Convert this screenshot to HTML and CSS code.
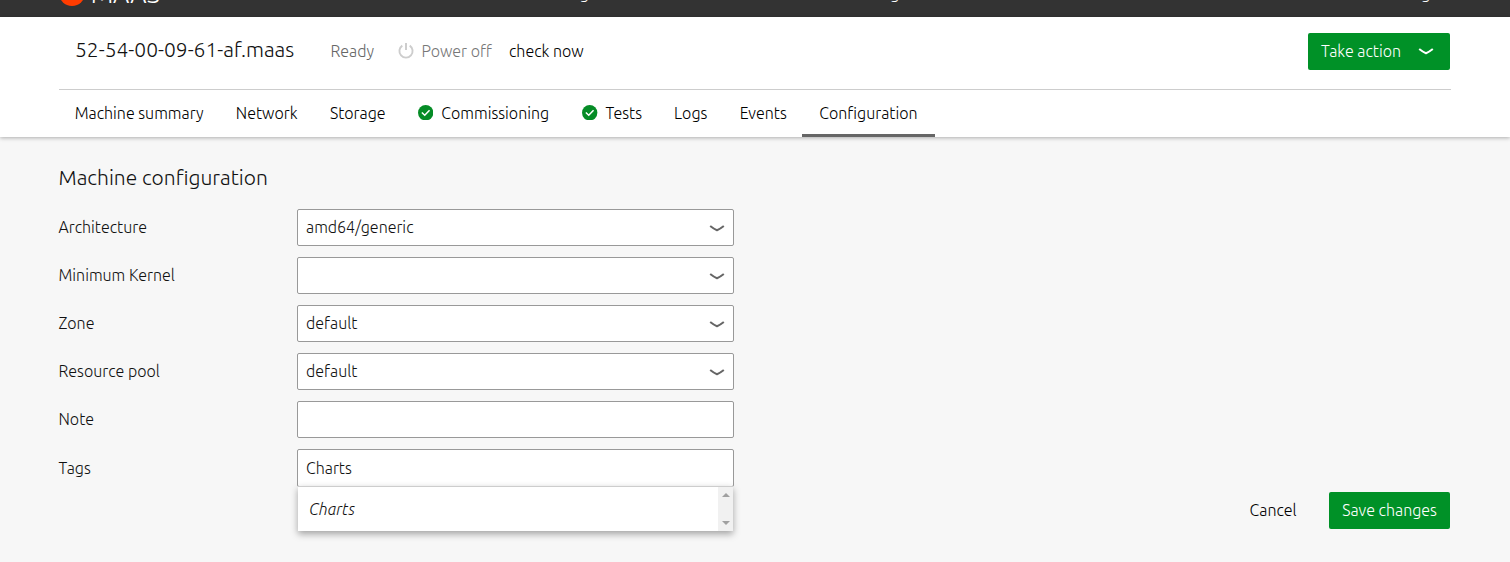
FILE: index.html
```html
<!DOCTYPE html>
<html lang="en">
<head>
<meta charset="utf-8">
<title>Machine configuration</title>
<link rel="stylesheet" href="styles.css">
</head>
<body>
<nav class="topbar">
  <div class="topbar-inner">
    <span class="logo-dot"></span>
    <span class="brand">MAAS</span>
    <span class="nav-link nav-images">Images</span>
    <span class="nav-link nav-settings">Settings</span>
    <span class="nav-link">Log out</span>
  </div>
</nav>
<header class="section-header">
  <div class="title-row">
    <h1 class="machine-name">52-54-00-09-61-af.maas</h1>
    <span class="status">Ready</span>
    <span class="power">
      <svg class="power-icon" viewBox="0 0 16 16"><path d="M4.3 2.6A6.6 6.6 0 1 0 11.7 2.6" fill="none" stroke="#cdcdcd" stroke-width="1.9"/><path d="M8 0V7" stroke="#cdcdcd" stroke-width="2"/></svg>
      <span>Power off</span>
    </span>
    <a class="check">check now</a>
    <button class="btn take-action"><span>Take action</span>
      <svg class="chevron" viewBox="0 0 16 16"><path d="M1.2 6Q5 9 8 10.2Q11 9 14.8 6" fill="none" stroke="#fff" stroke-width="2"/></svg>
    </button>
  </div>
  <div class="tabs">
    <a class="tab">Machine summary</a>
    <a class="tab">Network</a>
    <a class="tab">Storage</a>
    <a class="tab"><svg class="ok" viewBox="0 0 16 16"><circle cx="8" cy="8" r="8" fill="#058c26"/><path d="M4 7.8L7 10.6L12 5.4" fill="none" stroke="#fff" stroke-width="1.6"/></svg>Commissioning</a>
    <a class="tab tab-tests"><svg class="ok" viewBox="0 0 16 16"><circle cx="8" cy="8" r="8" fill="#058c26"/><path d="M4 7.8L7 10.6L12 5.4" fill="none" stroke="#fff" stroke-width="1.6"/></svg>Tests</a>
    <a class="tab">Logs</a>
    <a class="tab">Events</a>
    <a class="tab selected">Configuration</a>
  </div>
</header>
<main class="content">
  <h2 class="heading">Machine configuration</h2>
  <div class="form">
    <div class="row"><label class="label">Architecture</label><div class="field"><span>amd64/generic</span><svg class="chevron" viewBox="0 0 16 16"><path d="M1.2 6Q5 9 8 10.2Q11 9 14.8 6" fill="none" stroke="#666" stroke-width="2"/></svg></div></div>
    <div class="row"><label class="label">Minimum Kernel</label><div class="field"><span></span><svg class="chevron" viewBox="0 0 16 16"><path d="M1.2 6Q5 9 8 10.2Q11 9 14.8 6" fill="none" stroke="#666" stroke-width="2"/></svg></div></div>
    <div class="row"><label class="label">Zone</label><div class="field"><span>default</span><svg class="chevron" viewBox="0 0 16 16"><path d="M1.2 6Q5 9 8 10.2Q11 9 14.8 6" fill="none" stroke="#666" stroke-width="2"/></svg></div></div>
    <div class="row"><label class="label">Resource pool</label><div class="field"><span>default</span><svg class="chevron" viewBox="0 0 16 16"><path d="M1.2 6Q5 9 8 10.2Q11 9 14.8 6" fill="none" stroke="#666" stroke-width="2"/></svg></div></div>
    <div class="row"><label class="label">Note</label><div class="field"></div></div>
    <div class="row tags-row"><label class="label">Tags</label><div class="field"><span>Charts</span>
      <div class="dropdown"><em class="option">Charts</em>
        <div class="scrollbar"><svg class="arrow" viewBox="0 0 8 4"><path d="M0 4L4 0L8 4Z" fill="#a0a0a0"/></svg><svg class="arrow" viewBox="0 0 8 4"><path d="M0 0L4 4L8 0Z" fill="#a0a0a0"/></svg></div>
      </div></div></div>
  </div>
  <div class="actions"><button class="cancel">Cancel</button><button class="btn save">Save changes</button></div>
</main>
</body>
</html>
```
FILE: styles.css
```css
* { box-sizing: border-box; }
body { margin: 0; height: 562px; overflow: hidden; background: #f7f7f7; color: #111; font: 300 16px/24px Ubuntu, "Open Sans", "Noto Sans", sans-serif; }
h1, h2 { margin: 0; font-weight: 300; }
button { font: inherit; border: 0; padding: 0; }
span, label, h1, a, em { white-space: nowrap; }

.topbar { height: 17px; background: #333; color: #fff; overflow: hidden; }
.topbar-inner { display: flex; align-items: center; height: 48px; margin-top: -31px; padding-left: 59px; }
.topbar-inner > * { flex: none; }
.logo-dot { width: 26px; height: 26px; border-radius: 50%; background: #ff3c00; }
.brand { width: 70px; margin-left: 6px; padding-top: 1px; font-size: 25.5px; }
.nav-images { width: 294px; margin-left: 393px; }
.nav-settings { width: 556px; }

.section-header { position: relative; height: 120px; padding: 0 59px; background: #fff; box-shadow: 0 1px 4px rgba(0, 0, 0, .3); }
.title-row { display: flex; align-items: center; height: 73px; padding: 0 1px 4px 16px; border-bottom: 1px solid #cdcdcd; }
.machine-name { width: 255.4px; padding-bottom: 4px; font-size: 21px; }
.status { width: 68px; color: #666; }
.power { display: flex; align-items: center; width: 110.6px; gap: 7px; color: #777; }
.power-icon { width: 16px; height: 16px; }
.check { flex: 1; color: #000; }
.btn { border-radius: 2px; background: #009127; color: #fff; }
.take-action { display: flex; align-items: center; justify-content: space-between; width: 142px; height: 37px; padding: 0 16px 0 13px; }
.chevron { width: 16px; height: 16px; }
.tabs { display: flex; height: 47px; margin-left: -.5px; }
.tab { display: flex; align-items: center; padding: 0 16.2px 2px; color: #000; }
.tab-tests { padding-left: 16.8px; padding-right: 15.8px; }
.selected { margin-left: -1px; border-bottom: 3px solid #666; padding: 1px 17.3px 0; }
.ok { width: 15.4px; height: 15.4px; margin-right: 8px; }

.content { padding: 24px 60px 0 58.5px; }
.heading { height: 48px; font-size: 21px; line-height: 32px; }
.row { display: flex; align-items: center; height: 37px; margin-bottom: 11px; }
.label { width: 238.5px; padding-bottom: 2px; }
.field { display: flex; align-items: center; justify-content: space-between; position: relative; width: 437px; height: 37px; padding: 0 8px; border: 1px solid #999; border-radius: 2px; background: #fff; }
.field > span { padding-bottom: 2px; }
.tags-row { margin-bottom: 0; height: 38px; }
.tags-row .field { height: 38px; }
.tags-row .label, .tags-row .field > span { padding-bottom: 0; }
.dropdown { position: absolute; left: 0; top: 36px; display: flex; justify-content: space-between; align-items: center; width: 435px; height: 45px; padding-left: 11px; border-top: 1px solid #cdcdcd; background: #fff; box-shadow: 0 3px 7px rgba(0, 0, 0, .35); }
.option { padding-bottom: 1px; }
.scrollbar { display: flex; flex-direction: column; justify-content: space-between; align-items: center; width: 15px; height: 100%; padding: 6px 0; background: #f1f1f1; }
.arrow { width: 8px; height: 4px; }
.actions { display: flex; justify-content: flex-end; align-items: center; margin-top: 5px; }
.cancel { width: 79.5px; padding-bottom: 2px; text-align: left; background: none; color: #000; }
.save { width: 121px; height: 37px; padding-bottom: 2px; }
```
